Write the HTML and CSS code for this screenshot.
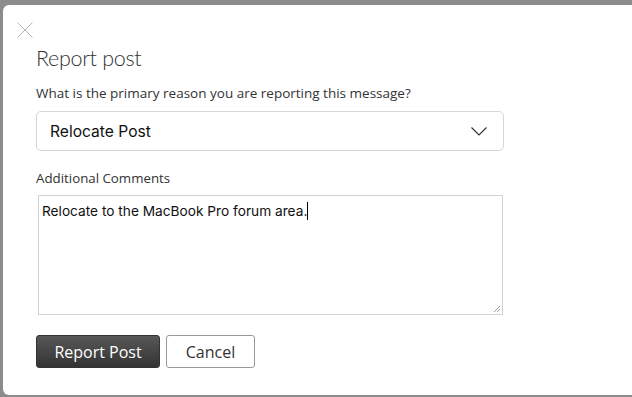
FILE: index.html
```html
<!DOCTYPE html>
<html lang="en">
<head>
  <meta charset="UTF-8" />
  <title>Report post</title>
  <link rel="stylesheet" href="styles.css">
</head>
<body>
  <div class="modal">
    <button class="close" aria-label="Close">
      <svg width="16" height="16" viewBox="0 0 16 16">
        <path d="M0.5 0.5 L15.5 15.5 M15.5 0.5 L0.5 15.5" stroke="#b5b5b5" stroke-width="1" fill="none"/>
      </svg>
    </button>
    <h2>Report post</h2>
    <label class="question">What is the primary reason you are reporting this message?</label>
    <div class="select">
      <span>Relocate Post</span>
      <svg width="16" height="9" viewBox="0 0 16 9">
        <path d="M0.5 0.5 L8 8 L15.5 0.5" stroke="#333" stroke-width="1.2" fill="none"/>
      </svg>
    </div>
    <label class="comments-label">Additional Comments</label>
    <div class="textarea">
      <span>Relocate to the MacBook Pro forum area.</span><span class="caret"></span>
      <svg class="grip" width="8" height="8" viewBox="0 0 8 8">
        <path d="M1 7 L7 1 M4 7 L7 4" stroke="#999" stroke-width="1" fill="none"/>
      </svg>
    </div>
    <div class="actions">
      <button class="primary">Report Post</button>
      <button class="secondary">Cancel</button>
    </div>
  </div>
</body>
</html>
```
FILE: styles.css
```css
body {
  margin: 0;
  background: #8c8c8c;
  font-family: "Open Sans", sans-serif;
  color: #333;
  padding: 5px 0 2px 3px;
  height: 397px;
  box-sizing: border-box;
  overflow: hidden;
}

.modal {
  position: relative;
  background: white;
  border-radius: 6px;
  width: 640px;
  height: 390px;
  box-sizing: border-box;
  padding: 38px 0 0 33px;
  display: flex;
  flex-direction: column;
}

.close {
  position: absolute;
  left: 14px;
  top: 17px;
  background: none;
  border: none;
  padding: 0;
  width: 16px;
  height: 16px;
  display: flex;
}

h2 {
  margin: 0;
  font-family: "Lato", sans-serif;
  font-weight: 300;
  font-size: 21.5px;
  letter-spacing: -0.3px;
  line-height: 31px;
  color: #333;
}

.question {
  margin-top: 9px;
  font-size: 13.5px;
  line-height: 20px;
}

.select {
  margin-top: 8px;
  width: 468px;
  height: 40px;
  box-sizing: border-box;
  border: 1px solid #d6d6d6;
  border-radius: 5px;
  display: flex;
  align-items: center;
  justify-content: space-between;
  padding: 0 16px 0 13px;
  font-family: "Inter", sans-serif;
  font-size: 15.6px;
  color: #111;
}

.comments-label {
  margin-top: 17px;
  font-size: 13.3px;
  line-height: 20px;
}

.textarea {
  position: relative;
  margin: 7px 0 0 2px;
  width: 465px;
  height: 120px;
  box-sizing: border-box;
  border: 1px solid #d2d2d2;
  padding: 5px 3px;
  font-family: "Inter", sans-serif;
  font-size: 13.7px;
  line-height: 20px;
  color: #111;
}

.caret {
  display: inline-block;
  width: 1px;
  height: 18px;
  background: #000;
  vertical-align: -4px;
}

.grip {
  position: absolute;
  right: 1px;
  bottom: 1px;
}

.actions {
  margin-top: 20px;
  display: flex;
  gap: 6px;
}

.actions button {
  height: 33px;
  font-family: "Open Sans", sans-serif;
  font-size: 16px;
  border-radius: 3px;
  cursor: pointer;
}

.primary {
  width: 124px;
  background: linear-gradient(#585858, #333);
  color: white;
  border: 1px solid #333;
}

.secondary {
  width: 89px;
  background: white;
  color: #333;
  border: 1px solid #999;
  border-radius: 2px;
}
```
